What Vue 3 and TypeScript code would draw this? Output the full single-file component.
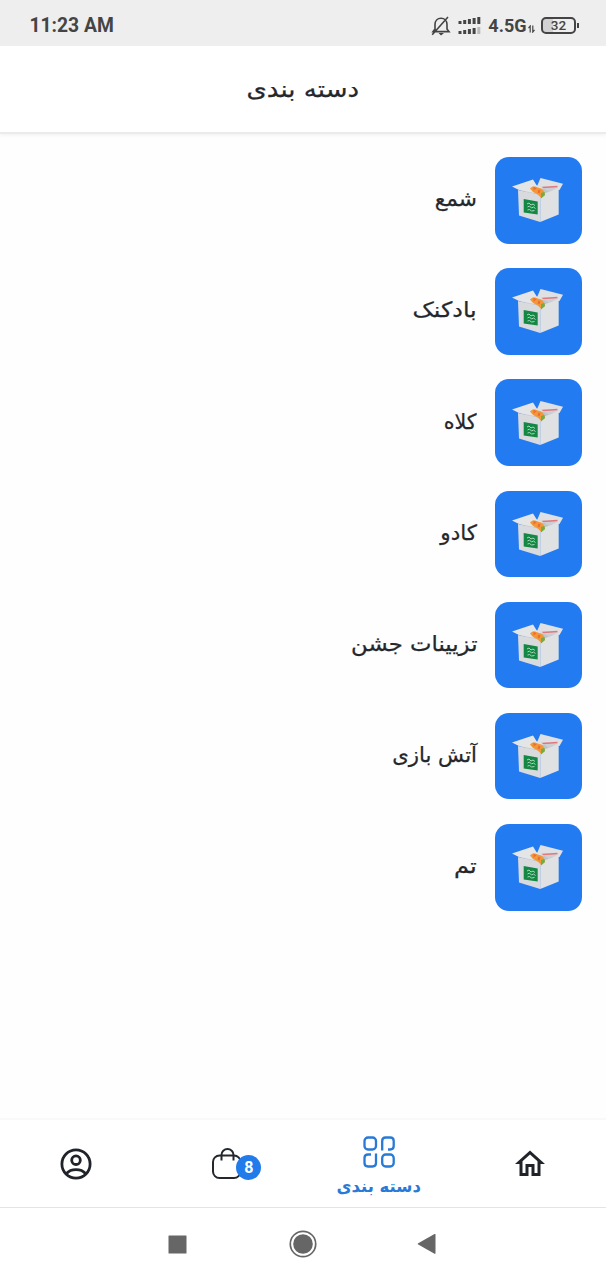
<script setup lang="ts">
interface Category {
  name: string
  stretch: number
}

const categories: Category[] = [
  { name: 'شمع', stretch: 1.03 },
  { name: 'بادکنک', stretch: 1.13 },
  { name: 'کلاه', stretch: 0.98 },
  { name: 'کادو', stretch: 1.02 },
  { name: 'تزیینات جشن', stretch: 1.085 },
  { name: 'آتش بازی', stretch: 1.01 },
  { name: 'تم', stretch: 1.15 },
]
const signalBars: number[] = [4, 5, 6, 7, 8]
const cartCount = 8
</script>

<template>
  <div class="phone">
    <div class="status">
      <span class="clock">11:23 AM</span>
      <div class="indicators">
        <svg class="bell" width="20" height="20" viewBox="0 0 20 20">
          <path d="M4 15V8.5C4 4.800 6.400 2.200 10 2.200s6 2.600 6 6.300V13l2 2.600H2L4 13M17 1L1.200 18.800" />
          <path class="clapper" d="M7.500 17h5.500L10 19.500z" />
        </svg>
        <svg class="signal" width="23" height="20" viewBox="0 0 23 20">
          <template v-for="(h, i) in signalBars" :key="i">
            <rect :x="0.500 + i * 4.700" :y="9 - h" width="3" :height="h - 1" />
            <rect :x="0.500 + i * 4.700" :y="19 - h" width="3" :height="h - 1" :opacity="i === 4 ? 0.3 : 1" />
          </template>
        </svg>
        <span class="network">4.5G</span>
        <svg class="data" width="7" height="8" viewBox="0 0 7 8">
          <path d="M2.200 7.500V1L.5 3.200M4.800.5V7l1.700-2.200" />
        </svg>
        <div class="battery"><span class="charge">32</span></div>
        <i class="nub"></i>
      </div>
    </div>

    <header class="header"><h1 class="title">دسته بندی</h1></header>

    <main class="list">
      <div v-for="item in categories" :key="item.name" class="row">
        <div class="tile">
          <svg width="54" height="50" viewBox="-2.500 -1.500 54 50">
            <path fill="#bfc4c9" d="M5 13L23 9l22 4-18 8z" />
            <path fill="#d9dadd" d="M4.500 13.500l22.200 5v27L5.500 39z" />
            <path fill="#dfe1e3" d="M26.700 18.500l18.500-7v26.500l-18.500 7.500z" />
            <path fill="#dfe0e3" d="M22.500 12L27 1.500l22.500 5.800-3.500 6.200z" />
            <path fill="#ccd0d4" d="M27 10l18 1-10 4z" />
            <path stroke="#df777c" stroke-width="1.300" fill="none" d="M29 11l15-1" />
            <path fill="#e4e5e7" d="M-1.500 10l21-7 5 8-4 5.500-15-3z" />
            <path fill="#f29836" d="M16.500 12c2-3 6-2.500 9-.5 4 .5 6 3.500 5.500 7.500l-3.500 2.500c-2-3-5-5-8-6z" />
            <path fill="#ee6b39" d="M20 10l3 2-3 2zM25 13l2 1-1 3-2-1z" />
            <path fill="#72ad43" d="M27.500 16.500l3.500-1 .5 3-4 3.500z" />
            <path fill="#158745" d="M10.200 22.500l14 2.500v13l-14-2z" />
            <path class="mark" d="M13.500 27.500l2-1 2 2 2-1 2 1.500M14 30.500l2-1 2 2 2-1 2 1.500M14 33.500l2-.5 2 1.500 3-.5" />
          </svg>
        </div>
        <span class="name" :style="{ '--stretch': item.stretch }">{{ item.name }}</span>
      </div>
    </main>

    <nav class="tabs">
      <div class="tab">
        <svg width="36" height="36" viewBox="0 0 24 24">
          <path fill="#20242a" d="M12 5.690l5 4.500V18h-2v-6H9v6H7v-7.810l5-4.500M12 3L2 12h3v8h6v-6h2v6h6v-8h3L12 3z" />
        </svg>
      </div>
      <div class="tab active">
        <svg class="grid-icon" width="32" height="32" viewBox="0 0 32 32">
          <rect x="1.500" y="1.500" width="11.500" height="12" rx="3.500" />
          <path d="M19.200 14.500V5q0-3.500 3.500-3.500h4.500q3.500 0 3.500 3.500v5q0 3.500-3.500 3.500H25" />
          <path d="M8 18.500H5Q1.500 18.500 1.500 22v5q0 3.500 3.500 3.500h4.500q3.500 0 3.500-3.500v-9.500" />
          <rect x="19.200" y="18.500" width="11.500" height="12" rx="3.500" />
        </svg>
        <span class="tab-name">دسته بندی</span>
      </div>
      <div class="tab">
        <div class="bag">
          <svg class="bag-icon" width="32" height="32" viewBox="0 0 32 32">
            <rect x="2" y="7.500" width="27.500" height="22.500" rx="6.500" />
            <path d="M10.500 12.500V7a6 6 0 0 1 12 0v5.500" />
          </svg>
          <span class="badge">{{ cartCount }}</span>
        </div>
      </div>
      <div class="tab">
        <svg class="user-icon" width="32" height="32" viewBox="0 0 32 32">
          <circle cx="16" cy="16" r="14.100" />
          <circle cx="16" cy="12.200" r="4.300" />
          <path d="M6.500 25.500c4.500-5.300 14.500-5.300 19 0" />
        </svg>
      </div>
    </nav>

    <div class="system">
      <svg width="19" height="19" viewBox="0 0 19 19"><rect x=".5" y=".5" width="18" height="18" rx=".5" /></svg>
      <svg width="28" height="28" viewBox="0 0 28 28">
        <circle class="ring" cx="14" cy="14" r="12.700" />
        <circle cx="14" cy="14" r="9.800" />
      </svg>
      <svg class="back" width="19" height="22" viewBox="0 0 19 22"><path d="M.8 10.500L17.500 1q1-.4 1 .6v18.600q0 1-1 .5L.8 11.300z" /></svg>
    </div>
  </div>
</template>

<style>
body {
  margin: 0;
  background: #fefefe;
}
</style>

<style scoped>
.phone {
  width: 606px;
  height: 1280px;
  display: flex;
  flex-direction: column;
  font-family: "DejaVu Sans", sans-serif;
  color: #24272b;
  overflow: hidden;
}
.status {
  flex: none;
  height: 46px;
  box-sizing: border-box;
  padding: 5px 27px 0 29.5px;
  background: #eee;
  display: flex;
  align-items: center;
  justify-content: space-between;
  font-family: Roboto, sans-serif;
  color: #444;
}
.clock {
  font-weight: 700;
  font-size: 19.3px;
}
.indicators {
  display: flex;
  align-items: center;
}
.bell,
.data {
  fill: none;
  stroke: #444;
  stroke-width: 1.6;
}
.bell .clapper {
  fill: #444;
  stroke: none;
}
.signal {
  fill: #444;
  margin: 0 7px;
}
.network {
  font-weight: 700;
  font-size: 18px;
}
.data {
  stroke-width: 1.2;
  margin: 7px 6px 0 1.5px;
}
.battery {
  width: 35px;
  height: 17px;
  box-sizing: border-box;
  border: 2px solid #444;
  border-radius: 5px;
  background: linear-gradient(90deg, #d2d2d2 32%, transparent 32%);
  display: flex;
  align-items: center;
  justify-content: center;
}
.charge {
  font-size: 13.5px;
  font-weight: 500;
  line-height: 13px;
}
.nub {
  width: 2px;
  height: 5px;
  margin-left: 1px;
  background: #444;
}
.header {
  flex: none;
  height: 88px;
  box-sizing: border-box;
  border-bottom: 2px solid #ebebeb;
  box-shadow: 0 1px 4px #f0f0f0;
  background: #fff;
  display: flex;
  align-items: center;
  justify-content: center;
  direction: rtl;
}
.title {
  margin: 0 0 1px;
  font-size: 23px;
  font-weight: 400;
  transform: scaleX(1.13);
  -webkit-text-stroke: 0.25px #24272b;
}
.list {
  flex: 1;
  direction: rtl;
  padding: 23px 24.5px 0;
  display: flex;
  flex-direction: column;
  gap: 24.7px;
}
.row {
  display: flex;
  align-items: center;
  height: 86.5px;
  gap: 18px;
}
.tile {
  width: 86.5px;
  height: 86.5px;
  border-radius: 14px;
  background: #227bf1;
  display: flex;
  align-items: center;
  justify-content: center;
}
.mark {
  fill: none;
  stroke: #a9d9ba;
  stroke-width: 1;
}
.name {
  margin-bottom: 2px;
  font-size: 21px;
  transform: scaleX(var(--stretch));
  transform-origin: right;
  -webkit-text-stroke: 0.25px #24272b;
}
.tabs {
  flex: none;
  height: 90px;
  box-sizing: border-box;
  border-top: 2px solid #f9f9f9;
  border-bottom: 1px solid #e4e4e4;
  background: #fff;
  display: flex;
  direction: rtl;
}
.tab {
  flex: 1;
  display: flex;
  flex-direction: column;
  align-items: center;
  justify-content: center;
}
.tab > svg {
  margin-top: 1px;
}
.tab > .grid-icon {
  margin-top: 5px;
  fill: none;
  stroke: #2979d6;
  stroke-width: 2.3;
}
.tab-name {
  margin-top: 7px;
  font-size: 17px;
  line-height: 22px;
  font-weight: 700;
  color: #2979d6;
  transform: scaleX(0.965);
}
.bag {
  position: relative;
  height: 32px;
  direction: ltr;
}
.bag-icon {
  fill: none;
  stroke: #24282d;
  stroke-width: 2;
}
.badge {
  position: absolute;
  left: 25px;
  top: 7px;
  width: 25px;
  height: 25px;
  border-radius: 50%;
  background: #227bea;
  color: #fff;
  font: 700 16px/25px Roboto, sans-serif;
  text-align: center;
}
.user-icon {
  fill: none;
  stroke: #20242a;
  stroke-width: 2.8;
}
.system {
  flex: none;
  height: 72px;
  background: #fff;
  display: flex;
  align-items: center;
  justify-content: center;
  gap: 102px;
  fill: #666;
}
.system .back {
  margin: 0 2px 0 -2px;
}
.system .ring {
  fill: none;
  stroke: #666;
  stroke-width: 1.7;
}
</style>
